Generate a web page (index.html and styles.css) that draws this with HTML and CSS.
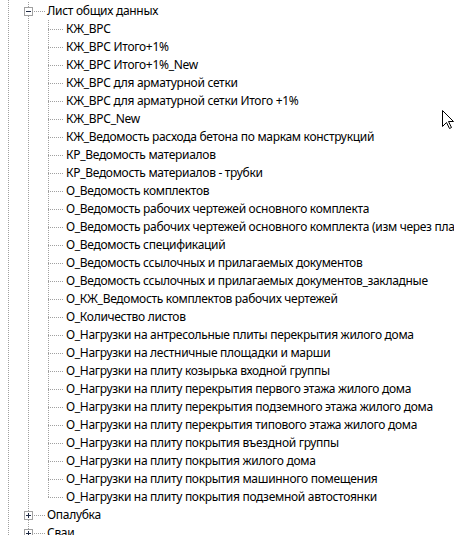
FILE: index.html
```html
<!DOCTYPE html>
<html lang="ru">
<head>
<meta charset="utf-8">
<title>Дерево</title>
<link rel="stylesheet" href="styles.css">
</head>
<body>
<div class="tree">
  <ul class="level1">
    <li class="node open">
      <div class="row row1"><span class="box minus"></span><span class="hconn"></span><span class="label">Лист общих данных</span></div>
      <ul class="level2">
        <li class="leaf"><span class="conn"></span><span class="label">КЖ_ВРС</span></li>
        <li class="leaf"><span class="conn"></span><span class="label">КЖ_ВРС Итого+1%</span></li>
        <li class="leaf"><span class="conn"></span><span class="label">КЖ_ВРС Итого+1%_New</span></li>
        <li class="leaf"><span class="conn"></span><span class="label">КЖ_ВРС для арматурной сетки</span></li>
        <li class="leaf"><span class="conn"></span><span class="label">КЖ_ВРС для арматурной сетки Итого +1%</span></li>
        <li class="leaf"><span class="conn"></span><span class="label">КЖ_ВРС_New</span></li>
        <li class="leaf"><span class="conn"></span><span class="label">КЖ_Ведомость расхода бетона по маркам конструкций</span></li>
        <li class="leaf"><span class="conn"></span><span class="label">КР_Ведомость материалов</span></li>
        <li class="leaf"><span class="conn"></span><span class="label">КР_Ведомость материалов - трубки</span></li>
        <li class="leaf"><span class="conn"></span><span class="label">О_Ведомость комплектов</span></li>
        <li class="leaf"><span class="conn"></span><span class="label">О_Ведомость рабочих чертежей основного комплекта</span></li>
        <li class="leaf"><span class="conn"></span><span class="label">О_Ведомость рабочих чертежей основного комплекта (изм через плаг</span></li>
        <li class="leaf"><span class="conn"></span><span class="label">О_Ведомость спецификаций</span></li>
        <li class="leaf"><span class="conn"></span><span class="label">О_Ведомость ссылочных и прилагаемых документов</span></li>
        <li class="leaf"><span class="conn"></span><span class="label">О_Ведомость ссылочных и прилагаемых документов_закладные</span></li>
        <li class="leaf"><span class="conn"></span><span class="label">О_КЖ_Ведомость комплектов рабочих чертежей</span></li>
        <li class="leaf"><span class="conn"></span><span class="label">О_Количество листов</span></li>
        <li class="leaf"><span class="conn"></span><span class="label">О_Нагрузки на антресольные плиты перекрытия жилого дома</span></li>
        <li class="leaf"><span class="conn"></span><span class="label">О_Нагрузки на лестничные площадки и марши</span></li>
        <li class="leaf"><span class="conn"></span><span class="label">О_Нагрузки на плиту козырька входной группы</span></li>
        <li class="leaf"><span class="conn"></span><span class="label">О_Нагрузки на плиту перекрытия первого этажа жилого дома</span></li>
        <li class="leaf"><span class="conn"></span><span class="label">О_Нагрузки на плиту перекрытия подземного этажа жилого дома</span></li>
        <li class="leaf"><span class="conn"></span><span class="label">О_Нагрузки на плиту перекрытия типового этажа жилого дома</span></li>
        <li class="leaf"><span class="conn"></span><span class="label">О_Нагрузки на плиту покрытия въездной группы</span></li>
        <li class="leaf"><span class="conn"></span><span class="label">О_Нагрузки на плиту покрытия жилого дома</span></li>
        <li class="leaf"><span class="conn"></span><span class="label">О_Нагрузки на плиту покрытия машинного помещения</span></li>
        <li class="leaf last"><span class="conn"></span><span class="label">О_Нагрузки на плиту покрытия подземной автостоянки</span></li>
      </ul>
    </li>
    <li class="node">
      <div class="row row1"><span class="box plus"></span><span class="hconn"></span><span class="label">Опалубка</span></div>
    </li>
    <li class="node">
      <div class="row row1"><span class="box plus"></span><span class="hconn"></span><span class="label">Сваи</span></div>
    </li>
  </ul>
  <svg class="cursor" width="13" height="21" viewBox="0 0 13 21" aria-hidden="true">
    <path d="M0.5 0.5 L0.5 16.5 L4.5 12.5 L7.5 18.5 L9.5 17.5 L6.5 11.5 L11.5 11.5 Z" fill="#fff" stroke="#000" stroke-width="1"/>
  </svg>
</div>
</body>
</html>
```

FILE: styles.css
```css
html, body {
  margin: 0;
  padding: 0;
  background: #fff;
}

body {
  width: 454px;
  height: 535px;
  overflow: hidden;
  font-family: "Noto Sans", "Open Sans", sans-serif;
  font-size: 12px;
  letter-spacing: -0.3px;
  color: #000;
}

.tree {
  position: relative;
  height: 535px;
  padding-top: 2px;
  box-sizing: border-box;
  background-image: repeating-linear-gradient(to bottom, #a0a0a0 0 1px, transparent 1px 2px);
  background-size: 1px 100%;
  background-position: 8px 0;
  background-repeat: no-repeat;
}

ul {
  list-style: none;
  margin: 0;
  padding: 0;
}

.level1 {
  background-image: repeating-linear-gradient(to bottom, #a0a0a0 0 1px, transparent 1px 2px);
  background-size: 1px 600px;
  background-position: 28px -2px;
  background-repeat: no-repeat;
}

.row {
  display: flex;
  align-items: center;
  height: 18px;
  white-space: nowrap;
}

.row1 {
  padding-left: 24px;
}

.box {
  width: 9px;
  height: 9px;
  box-sizing: border-box;
  border: 1px solid #a0a0a0;
  background: #fff;
  position: relative;
  flex: none;
}

.box::before {
  content: "";
  position: absolute;
  left: 1px;
  top: 3px;
  width: 5px;
  height: 1px;
  background: #1f2a44;
}

.plus::after {
  content: "";
  position: absolute;
  left: 3px;
  top: 1px;
  width: 1px;
  height: 5px;
  background: #1f2a44;
}

.hconn {
  width: 11px;
  height: 1px;
  flex: none;
  background-image: repeating-linear-gradient(to right, #a0a0a0 0 1px, transparent 1px 2px);
  margin-left: 1px;
}

.label {
  margin-left: 2px;
  line-height: 18px;
}

.level2 {
  padding-left: 48px;
}

.leaf {
  display: flex;
  align-items: center;
  height: 18px;
  white-space: nowrap;
}

.conn {
  width: 15px;
  height: 18px;
  flex: none;
  background-image:
    repeating-linear-gradient(to bottom, #a0a0a0 0 1px, transparent 1px 2px),
    repeating-linear-gradient(to right, #a0a0a0 0 1px, transparent 1px 2px);
  background-size: 1px 18px, 15px 1px;
  background-position: 0 0, 0 9px;
  background-repeat: no-repeat;
}

.leaf.last .conn {
  background-size: 1px 9px, 15px 1px;
}

.leaf .label {
  margin-left: 3px;
}

.cursor {
  position: absolute;
  left: 442px;
  top: 110px;
}
```
